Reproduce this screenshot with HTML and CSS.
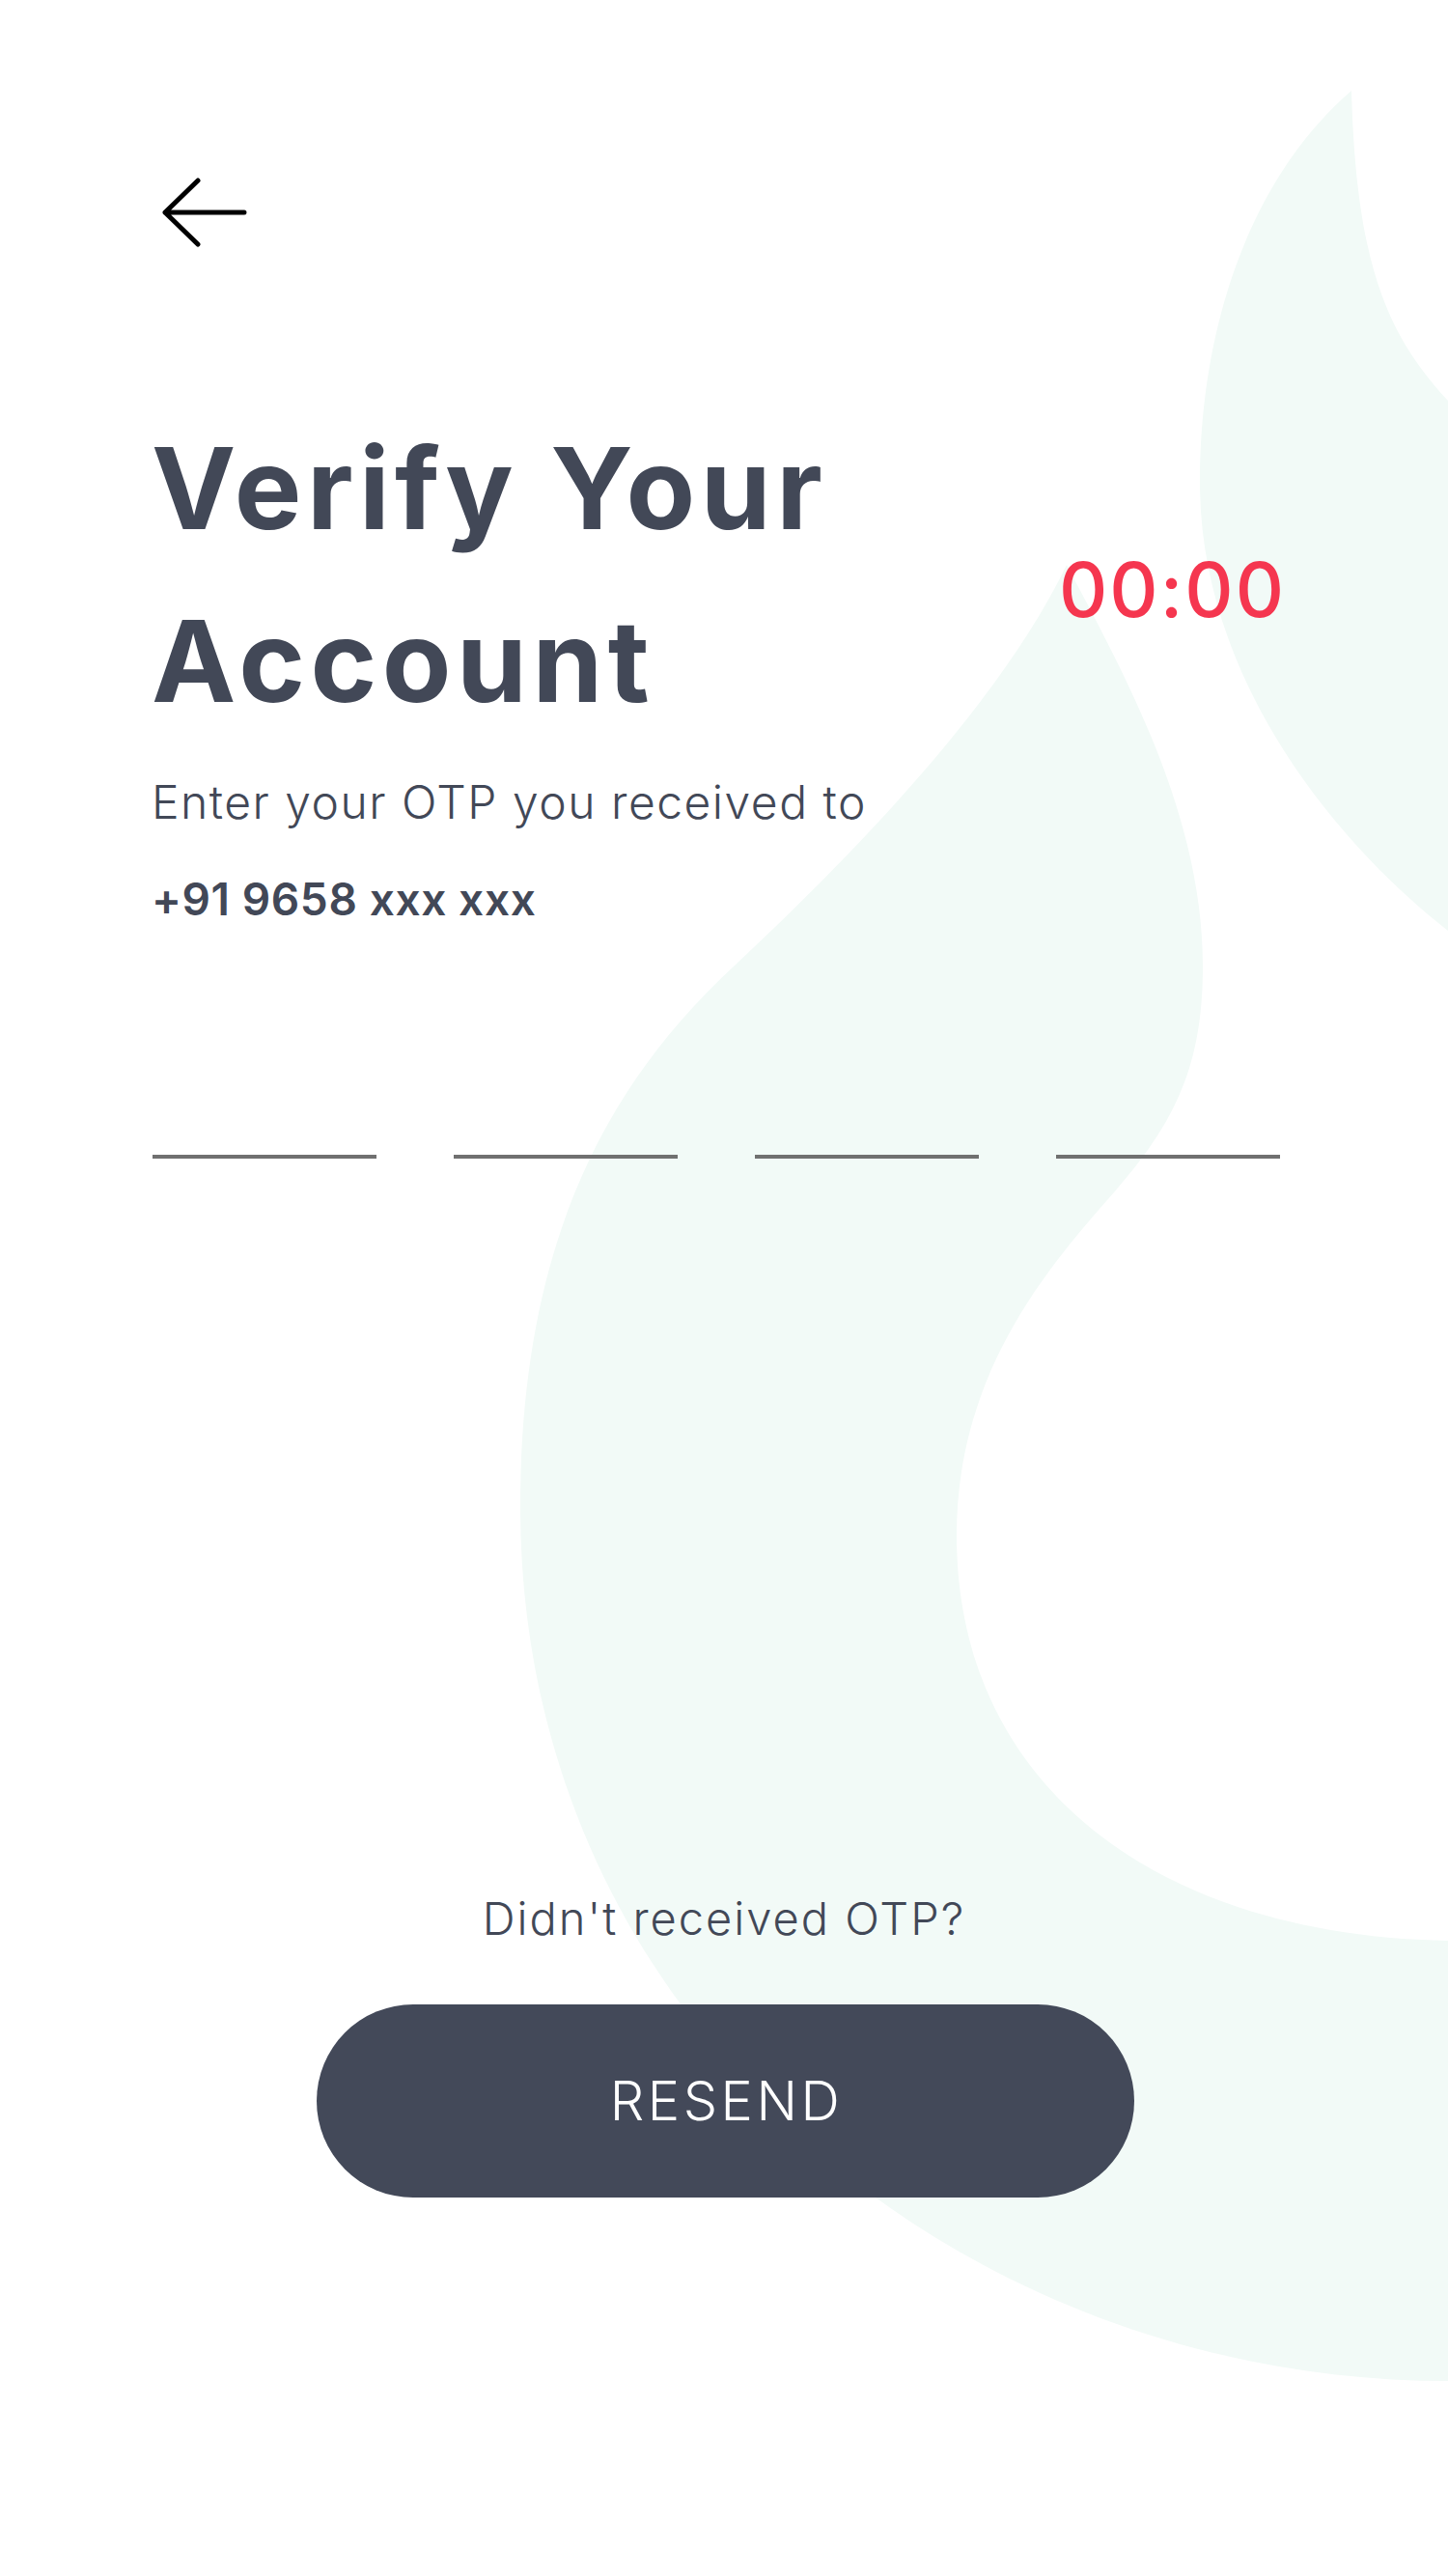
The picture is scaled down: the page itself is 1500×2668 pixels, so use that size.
FILE: index.html
```html
<!DOCTYPE html>
<html lang="en">
<head>
<meta charset="utf-8">
<title>Verify Your Account</title>
<link rel="stylesheet" href="styles.css">
</head>
<body>
<div class="screen">
  <svg class="bg" viewBox="0 0 1500 2668" width="1500" height="2668" aria-hidden="true">
    <path class="blob" d="M1105 585 C1160 690 1246 840 1246 1000 C1246 1100 1220 1160 1154 1235 C1088 1310 991 1420 991 1590 C991 1850 1200 2005 1500 2010 L1500 2466 C1000 2466 539 2100 539 1561 C539 1300 620 1130 761 1000 C900 870 1040 720 1105 585 Z"/>
    <path class="blob" d="M1500 415 C1440 350 1405 280 1400 94 C1300 180 1243 330 1243 500 C1243 700 1380 870 1500 964 Z"/>
  </svg>
  <main class="content">
    <button class="back" type="button" aria-label="Back">
      <svg width="92" height="80" viewBox="0 0 92 80" aria-hidden="true">
        <path d="M88 40H6M40 7L6 40L40 73" fill="none" stroke="#000" stroke-width="5" stroke-linecap="round" stroke-linejoin="round"/>
      </svg>
    </button>
    <div class="title-row">
      <h1 class="title">Verify Your<br>Account</h1>
      <div class="timer">00:00</div>
    </div>
    <p class="subtitle">Enter your OTP you received to</p>
    <p class="phone">+91 9658 xxx xxx</p>
    <div class="otp">
      <span class="otp-slot"></span>
      <span class="otp-slot"></span>
      <span class="otp-slot"></span>
      <span class="otp-slot"></span>
    </div>
    <p class="resend-q">Didn't received OTP?</p>
    <button class="resend" type="button">RESEND</button>
  </main>
</div>
</body>
</html>
```

FILE: styles.css
```css
body {
  margin: 0;
  background: #fff;
}

.screen {
  position: relative;
  width: 1500px;
  height: 2668px;
  overflow: hidden;
  background: #fff;
  font-family: Inter, "Noto Sans", sans-serif;
  color: #424857;
}

.bg {
  position: absolute;
  left: 0;
  top: 0;
}

.blob {
  fill: #f2faf7;
}

.content {
  position: relative;
  display: flex;
  flex-direction: column;
  padding: 180px 157px 0;
}

.back {
  align-self: flex-start;
  margin-left: 8px;
  padding: 0;
  border: 0;
  background: none;
  display: block;
  width: 92px;
  height: 80px;
}

.back svg {
  display: block;
}

.title-row {
  display: flex;
  justify-content: space-between;
  align-items: flex-start;
  margin-top: 156px;
}

.title {
  margin: 0;
  font-size: 117px;
  line-height: 179px;
  font-weight: 700;
  letter-spacing: 5.5px;
}

.timer {
  margin: 148px 11px 0 0;
  font-size: 78px;
  line-height: 94px;
  font-weight: 500;
  letter-spacing: 2px;
  color: #f5364f;
}

.subtitle {
  margin: 27px 0 0;
  font-size: 48px;
  line-height: 60px;
  font-weight: 300;
  letter-spacing: 1.5px;
}

.phone {
  margin: 40px 0 0;
  font-size: 46px;
  line-height: 60px;
  font-weight: 600;
  letter-spacing: 0.6px;
}

.otp {
  display: flex;
  gap: 80px;
  margin-top: 235px;
  padding-left: 1px;
}

.otp-slot {
  width: 232px;
  height: 4px;
  background: #707070;
}

.resend-q {
  margin: 757px 0 0;
  text-align: center;
  font-size: 47px;
  line-height: 60px;
  font-weight: 300;
  letter-spacing: 2px;
}

.resend {
  align-self: center;
  margin-top: 59px;
  margin-left: 2px;
  width: 847px;
  height: 200px;
  border: 0;
  border-radius: 100px;
  background: #434959;
  color: #fff;
  font-family: inherit;
  font-size: 56px;
  font-weight: 300;
  letter-spacing: 3.5px;
  display: flex;
  align-items: center;
  justify-content: center;
  padding: 0 0 0 3px;
}
```
